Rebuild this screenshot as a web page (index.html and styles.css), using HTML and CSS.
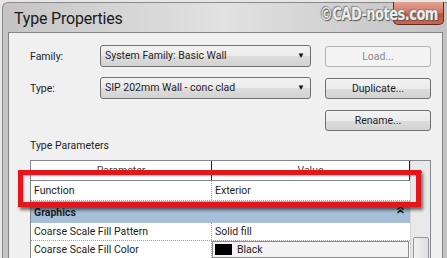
FILE: index.html
```html
<!DOCTYPE html>
<html lang="en">
<head>
  <meta charset="UTF-8">
  <meta name="viewport" content="width=device-width, initial-scale=1.0">
  <title>Type Properties</title>
  <link rel="stylesheet" href="styles.css">
</head>
<body>
  <div class="window">
    <div class="titlebar">
      <span class="title">Type Properties</span>
      <div class="close-btn"></div>
      <div class="watermark">©CAD-notes.com</div>
    </div>

    <div class="client">
      <div class="form-row">
        <span class="label">Family:</span>
        <div class="combo">System Family: Basic Wall<span class="arrow">▼</span></div>
        <button class="btn disabled">Load...</button>
      </div>
      <div class="form-row">
        <span class="label">Type:</span>
        <div class="combo">SIP 202mm Wall - conc clad<span class="arrow">▼</span></div>
        <button class="btn">Duplicate...</button>
      </div>
      <div class="form-row">
        <span class="label"></span>
        <div class="combo-spacer"></div>
        <button class="btn">Rename...</button>
      </div>

      <div class="section-label">Type Parameters</div>

      <div class="grid-wrap">
        <div class="grid">
          <div class="grid-row header">
            <div class="cell">Parameter</div>
            <div class="cell">Value</div>
          </div>
          <div class="grid-row tall">
            <div class="cell">Function</div>
            <div class="cell">Exterior</div>
          </div>
          <div class="grid-row group">
            <div class="cell">Graphics</div>
            <svg class="collapse" width="7" height="8" viewBox="0 0 7 8">
              <path d="M0.5 3.5 L3.5 0.8 L6.5 3.5 M0.5 7 L3.5 4.3 L6.5 7" fill="none" stroke="#111" stroke-width="1.4"/>
            </svg>
          </div>
          <div class="grid-row">
            <div class="cell">Coarse Scale Fill Pattern</div>
            <div class="cell">Solid fill</div>
          </div>
          <div class="grid-row">
            <div class="cell">Coarse Scale Fill Color</div>
            <div class="cell">
              <div class="color-box"><span class="swatch"></span>Black</div>
            </div>
          </div>
        </div>
        <div class="scrollbar">
          <span class="scroll-up">▲</span>
          <div class="thumb"></div>
        </div>
      </div>
    </div>

    <div class="highlight"></div>
  </div>
</body>
</html>
```

FILE: styles.css
```css
body {
  margin: 0;
  width: 447px;
  height: 258px;
  overflow: hidden;
  background-color: #e6e6e6;
  font-family: Roboto, "Noto Sans", sans-serif;
  font-size: 10.5px;
  color: #1e1e1e;
}

.window {
  position: relative;
  margin: 2px 0 0 2px;
  height: 300px;
  padding: 0 4px 0 5px;
  border: 1px solid #8a8a8a;
  border-right: none;
  border-radius: 6px 0 0 0;
  background: linear-gradient(to right, #c4c4c4 0%, #d4d4d4 25%, #e2e2e2 50%, #d4d4d4 70%, #c2c2c2 100%);
}

.titlebar {
  height: 29px;
  display: flex;
  align-items: center;
}

.title {
  padding-left: 6px;
  padding-top: 1px;
  font-size: 16px;
  letter-spacing: -0.2px;
  color: #1a1a1a;
}

.close-btn {
  position: absolute;
  top: -1px;
  right: 3px;
  width: 49px;
  height: 22px;
  border: 1px solid #5e2a22;
  border-top: none;
  border-radius: 0 0 5px 5px;
  background: linear-gradient(#e2a494, #d47462 50%, #c4503c 55%, #d0644f);
}

.watermark {
  position: absolute;
  top: 1px;
  right: 9px;
  font-family: "DejaVu Sans Condensed", "DejaVu Sans", sans-serif;
  font-weight: bold;
  font-size: 17px;
  letter-spacing: -0.6px;
  transform: scaleX(0.85);
  transform-origin: right center;
  color: #ececec;
  text-shadow: 0 0 1px #666, 1px 1px 1px #555, -1px -1px 1px #888;
}

.client {
  height: 260px;
  background-color: #f0f0f0;
  border: 1px solid #858585;
  padding-left: 21px;
}

.form-row {
  display: flex;
  align-items: center;
  height: 22px;
  margin-top: 10px;
}

.form-row:first-child {
  margin-top: 12px;
}

.form-row:last-of-type {
  margin-top: 8px;
}

.label {
  width: 70px;
}

.combo {
  position: relative;
  box-sizing: border-box;
  width: 211px;
  height: 22px;
  line-height: 20px;
  padding-left: 4px;
  border: 1px solid #707070;
  border-radius: 3px;
  background: linear-gradient(#f3f3f3, #ebebeb 50%, #dddddd 51%, #d2d2d2);
}

.combo-spacer {
  width: 211px;
}

.arrow {
  position: absolute;
  right: 5px;
  top: 0;
  font-size: 8px;
  color: #111;
}

.btn {
  box-sizing: border-box;
  width: 106px;
  height: 21px;
  margin-left: 14px;
  border: 1px solid #707070;
  border-radius: 3px;
  background: linear-gradient(#f3f3f3, #ebebeb 50%, #dddddd 51%, #d2d2d2);
  font-family: inherit;
  font-size: inherit;
  color: #1e1e1e;
  padding: 0;
}

.btn.disabled {
  border-color: #adb2b5;
  background: #f4f4f4;
  color: #8a8a8a;
}

.section-label {
  margin-top: 8px;
  height: 14px;
  line-height: 14px;
}

.grid-wrap {
  display: flex;
  margin-top: 7px;
  width: 399px;
  border: 1px solid #828790;
  border-bottom: none;
  background: #fff;
}

.grid {
  width: 379px;
}

.grid-row {
  display: flex;
  height: 17px;
  border-bottom: 1px dotted #a0a0a0;
}

.grid-row .cell {
  box-sizing: border-box;
  display: flex;
  align-items: center;
  padding-left: 3px;
  white-space: nowrap;
}

.grid-row .cell:first-child {
  width: 181px;
  border-right: 1px dotted #a0a0a0;
}

.grid-row .cell:last-child {
  flex: 1;
}

.grid-row.header {
  height: 19px;
  border-bottom: 1px solid #828790;
  color: #444;
}

.grid-row.header .cell {
  justify-content: center;
  padding-left: 0;
}

.grid-row.header .cell:first-child,
.grid-row.header .cell:last-child {
  border-right: 1px solid #222;
}

.grid-row.tall {
  height: 19px;
}

.grid-row.group {
  height: 22px;
  background-color: #a7bed8;
  border-bottom: none;
  font-weight: bold;
  justify-content: space-between;
  align-items: center;
}

.grid-row.group .cell {
  height: 100%;
}

.grid-row.group .cell:first-child {
  border-right: none;
}

.collapse {
  margin: 0 6px 4px 0;
}

.color-box {
  box-sizing: border-box;
  display: flex;
  align-items: center;
  width: 197px;
  height: 17px;
  margin-left: -3px;
  border: 1px solid #8c8c8c;
  background: #f3f3f3;
}

.swatch {
  width: 17px;
  height: 11px;
  margin: 0 5px 0 2px;
  background: #000;
}

.scrollbar {
  width: 19px;
  background: #e9e9e9;
  border-left: 1px solid #d4d4d4;
}

.scroll-up {
  display: block;
  text-align: center;
  font-size: 6px;
  color: #444;
  margin-top: 6px;
}

.thumb {
  margin: 63px auto 0;
  width: 14px;
  height: 40px;
  border: 1px solid #979797;
  border-radius: 2px;
  background: linear-gradient(to right, #f2f2f2, #dedede);
}

.highlight {
  position: absolute;
  left: 15px;
  top: 167px;
  width: 393px;
  height: 27px;
  border: 5px solid #e3161b;
  box-shadow: 2px 3px 3px rgba(0, 0, 0, 0.55), inset 1px 1px 2px rgba(0, 0, 0, 0.3);
}
```
